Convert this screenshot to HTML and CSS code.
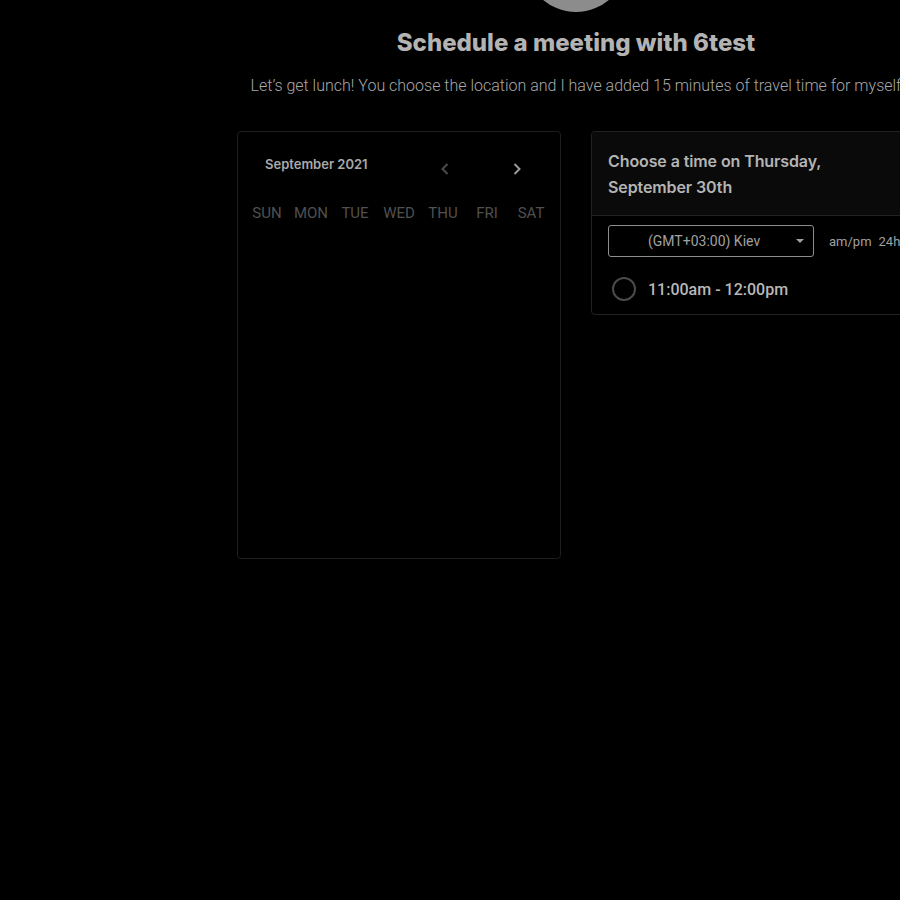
FILE: index.html
```html
<!DOCTYPE html>
<html>
<head>
<meta charset="utf-8">
<link rel="stylesheet" href="styles.css">
</head>
<body>
<div class="page">
  <div class="avatar"></div>
  <h1 class="title">Schedule a meeting with 6test</h1>
  <p class="subtitle">Let’s get lunch! You choose the location and I have added 15 minutes of travel time for myself</p>
  <div class="cards">
    <div class="card calendar">
      <div class="cal-head">
        <span class="month">September 2021</span>
        <div class="nav">
          <svg class="arrow dim" width="12" height="16" viewBox="0 0 12 16"><path d="M8.5 3 L3.5 8 L8.5 13" fill="none" stroke="currentColor" stroke-width="2"/></svg>
          <svg class="arrow" width="12" height="16" viewBox="0 0 12 16"><path d="M3.5 3 L8.5 8 L3.5 13" fill="none" stroke="currentColor" stroke-width="2"/></svg>
        </div>
      </div>
      <div class="days">
        <span>SUN</span><span>MON</span><span>TUE</span><span>WED</span><span>THU</span><span>FRI</span><span>SAT</span>
      </div>
    </div>
    <div class="card times">
      <div class="times-head">Choose a time on Thursday,<br>September 30th</div>
      <div class="controls">
        <div class="select">
          <span>(GMT+03:00) Kiev</span>
          <svg class="caret" width="8" height="4" viewBox="0 0 8 4"><path d="M0 0 L8 0 L4 4 Z" fill="currentColor"/></svg>
        </div>
        <div class="format"><span>am/pm</span><span>24h</span></div>
      </div>
      <div class="slot">
        <span class="radio"></span>
        <span class="slot-text">11:00am - 12:00pm</span>
      </div>
    </div>
  </div>
</div>
</body>
</html>
```
FILE: styles.css
```css
html, body {
  margin: 0;
  padding: 0;
  background: #000;
  overflow: hidden;
}
body {
  width: 900px;
  height: 900px;
}
.page {
  width: 1152px;
  display: flex;
  flex-direction: column;
  align-items: center;
}
.avatar {
  width: 102px;
  height: 102px;
  border-radius: 50%;
  background: #8c8c8c;
  margin-top: -90px;
}
.title {
  font-family: Inter, "Liberation Sans", sans-serif;
  font-weight: 800;
  font-size: 24px;
  line-height: 30px;
  color: #b3b3b3;
  margin: 16px 0 0;
  letter-spacing: 0;
}
.subtitle {
  font-family: Roboto, "Liberation Sans", sans-serif;
  font-weight: 300;
  font-size: 16px;
  line-height: 20px;
  color: #a8a8a8;
  margin: 18px 0 0;
  white-space: nowrap;
}
.cards {
  display: flex;
  gap: 30px;
  margin-top: 35px;
  align-items: flex-start;
}
.card {
  border: 1px solid #1e1e1e;
  border-radius: 4px;
  background: #000;
}
.calendar {
  height: 428px;
  padding: 0 7px;
  box-sizing: border-box;
  width: 324px;
}
.cal-head {
  display: flex;
  align-items: center;
  justify-content: space-between;
  height: 66px;
  padding: 0 0 0 20px;
}
.month {
  font-family: Inter, "Liberation Sans", sans-serif;
  font-weight: 600;
  font-size: 13px;
  color: #a9a9a9;
  margin-top: -2px;
}
.nav {
  display: flex;
  gap: 60px;
  margin-right: 30px;
  margin-top: 8px;
}
.arrow {
  color: #9a9a9a;
  display: block;
}
.arrow.dim {
  color: #4a4a4a;
}
.days {
  display: grid;
  grid-template-columns: repeat(7, 1fr);
  font-family: Roboto, "Liberation Sans", sans-serif;
  font-size: 15px;
  color: #505050;
  text-align: center;
  margin-top: 6px;
}
.times {
  width: 324px;
  box-sizing: border-box;
  padding-bottom: 9px;
  border-color: #222;
}
.times-head {
  background: #0a0a0a;
  border-bottom: 1px solid #222;
  padding: 16px 16px 15px;
  font-family: Inter, "Liberation Sans", sans-serif;
  font-weight: 600;
  font-size: 16px;
  line-height: 26px;
  color: #b4b4b4;
  border-radius: 4px 4px 0 0;
  letter-spacing: -0.1px;
}
.controls {
  display: flex;
  align-items: center;
  gap: 15px;
  padding: 9px 16px 0;
}
.select {
  flex-shrink: 0;
  width: 206px;
  height: 32px;
  box-sizing: border-box;
  border: 1px solid #8e8e8e;
  border-radius: 3px;
  display: flex;
  align-items: center;
  justify-content: space-between;
  padding: 0 9px 0 39px;
  font-family: Roboto, "Liberation Sans", sans-serif;
  font-size: 14px;
  color: #a0a0a0;
}
.caret {
  color: #a0a0a0;
  display: block;
}
.format {
  display: flex;
  flex-shrink: 0;
  gap: 7px;
  font-family: Roboto, "Liberation Sans", sans-serif;
  font-size: 13px;
  color: #a0a0a0;
}
.slot {
  display: flex;
  align-items: center;
  gap: 12px;
  padding: 16px 20px 0;
  height: 32px;
}
.radio {
  width: 20px;
  height: 20px;
  border: 2px solid #4a4a4a;
  border-radius: 50%;
}
.slot-text {
  font-family: Roboto, "Liberation Sans", sans-serif;
  font-weight: 500;
  font-size: 16px;
  color: #b8b8b8;
}
```
